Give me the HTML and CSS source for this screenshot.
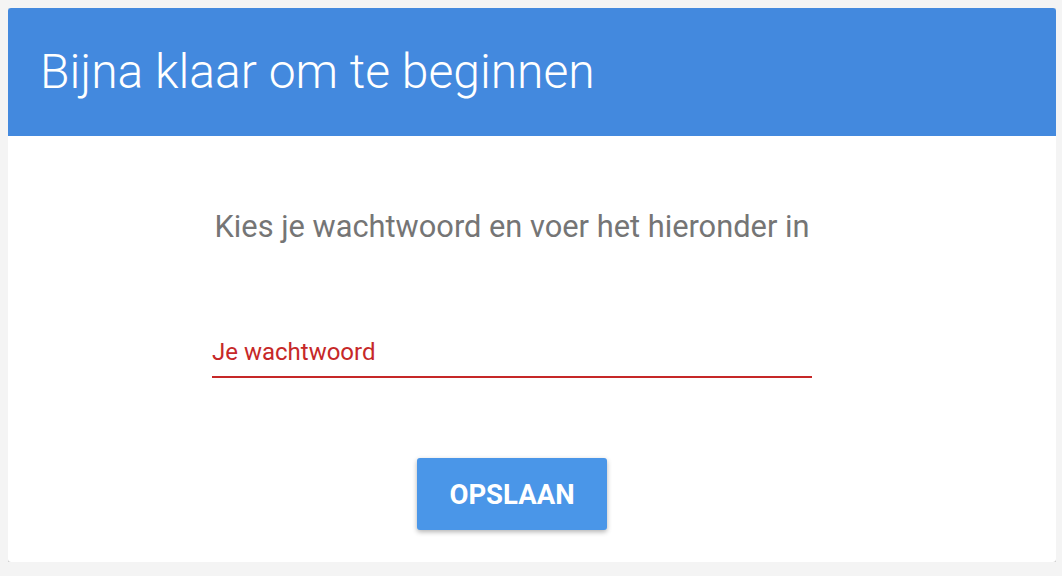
FILE: index.html
```html
<!DOCTYPE html>
<html lang="nl">
<head>
    <meta charset="UTF-8">
    <meta name="viewport" content="width=device-width, initial-scale=1.0">
    <title>Wachtwoord instellen</title>
    <link rel="stylesheet" href="styles.css">
</head>
<body>
    <div class="card">
        <div class="card-header">
            <h1>Bijna klaar om te beginnen</h1>
        </div>
        <div class="card-body">
            <p class="intro">Kies je wachtwoord en voer het hieronder in</p>
            <div class="field">
                <input type="password" class="password" placeholder="Je wachtwoord">
            </div>
            <div class="actions">
                <button type="button" class="save">OPSLAAN</button>
            </div>
        </div>
    </div>
</body>
</html>
```

FILE: styles.css
```css
*{
    box-sizing: border-box;
}
body{
    margin: 8px 6px 8px 8px;
    background: #f4f4f4;
    font-family: Roboto, "Liberation Sans", sans-serif;
}
.card{
    background: #fff;
    border-radius: 3px;
    overflow: hidden;
    box-shadow: 0 1px 4px rgba(0,0,0,0.4);
    height: 554px;
}
.card-header{
    background: #4389de;
    height: 128px;
    padding: 0 0 0 32px;
    display: flex;
    align-items: center;
}
.card-header h1{
    margin: 0;
    color: #fff;
    font-weight: 300;
    font-size: 48px;
    padding-bottom: 2px;
}
.card-body{
    width: 600px;
    margin-left: 204px;
    padding-top: 71px;
}
.intro{
    margin: 0;
    color: #757575;
    font-size: 30.8px;
    text-align: center;
    line-height: 40px;
}
.field{
    margin-top: 89px;
}
.password{
    display: block;
    width: 100%;
    border: 0;
    border-bottom: 2px solid #c62828;
    outline: none;
    padding: 0 0 8px 0;
    font-family: inherit;
    font-size: 24px;
    line-height: 32px;
    color: #c62828;
    background: transparent;
}
.password::placeholder{
    color: #c62828;
    opacity: 1;
}
.actions{
    margin-top: 80px;
    text-align: center;
}
.save{
    width: 190px;
    height: 72px;
    border: 0;
    border-radius: 3px;
    background: #4a96e8;
    color: #fff;
    font-family: inherit;
    font-weight: 700;
    font-size: 27.5px;
    cursor: pointer;
    box-shadow: 0 2px 5px rgba(0,0,0,0.3);
}
```
